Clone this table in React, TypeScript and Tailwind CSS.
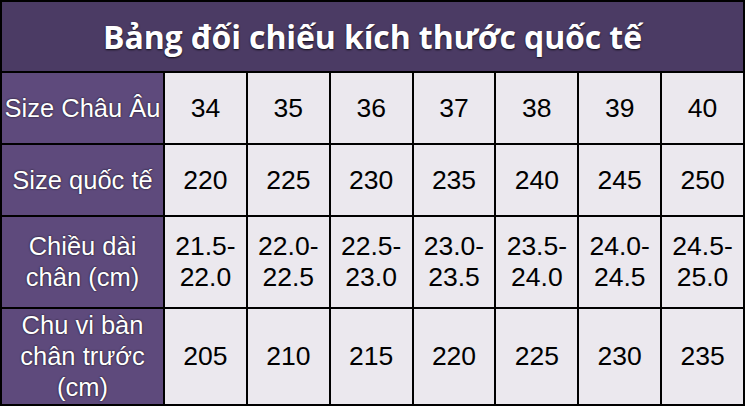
const ROWS: { label: string[]; values: string[][] }[] = [
  { label: ['Size Châu Âu'], values: ['34', '35', '36', '37', '38', '39', '40'].map((v) => [v]) },
  { label: ['Size quốc tế'], values: ['220', '225', '230', '235', '240', '245', '250'].map((v) => [v]) },
  {
    label: ['Chiều dài', 'chân (cm)'],
    values: [
      ['21.5-', '22.0'],
      ['22.0-', '22.5'],
      ['22.5-', '23.0'],
      ['23.0-', '23.5'],
      ['23.5-', '24.0'],
      ['24.0-', '24.5'],
      ['24.5-', '25.0'],
    ],
  },
  { label: ['Chu vi bàn', 'chân trước', '(cm)'], values: ['205', '210', '215', '220', '225', '230', '235'].map((v) => [v]) },
];

export default function App() {
  return (
    <div className="w-[745px] h-[406px] bg-black p-[2px] font-['Liberation_Sans',Arial,sans-serif]">
      <div className="grid h-full grid-cols-[161px_repeat(7,1fr)] grid-rows-[69px_70px_70px_90px_1fr] gap-[2px]">
        <div className="col-span-8 flex items-center justify-center bg-[#4b3b64]">
          <h1 className="font-['Open_Sans',sans-serif] text-[32px] font-bold text-white tracking-[-0.1px] [text-shadow:0_1px_2px_rgba(0,0,0,0.8)]">
            Bảng đối chiếu kích thước quốc tế
          </h1>
        </div>
        {ROWS.map((row, i) => (
          <>
            <div
              key={`l${i}`}
              className="flex flex-col items-center justify-center bg-[#5e4a7c] text-[25.5px] leading-[31px] text-white [text-shadow:0_0_2px_rgba(0,0,0,0.9)]"
            >
              {row.label.map((t) => (
                <span key={t}>{t}</span>
              ))}
            </div>
            {row.values.map((v, j) => (
              <div
                key={`c${i}-${j}`}
                className="flex flex-col items-center justify-center bg-[#ebe8ee] text-[26.5px] leading-[31px] text-black"
              >
                {v.map((t) => (
                  <span key={t}>{t}</span>
                ))}
              </div>
            ))}
          </>
        ))}
      </div>
    </div>
  );
}
